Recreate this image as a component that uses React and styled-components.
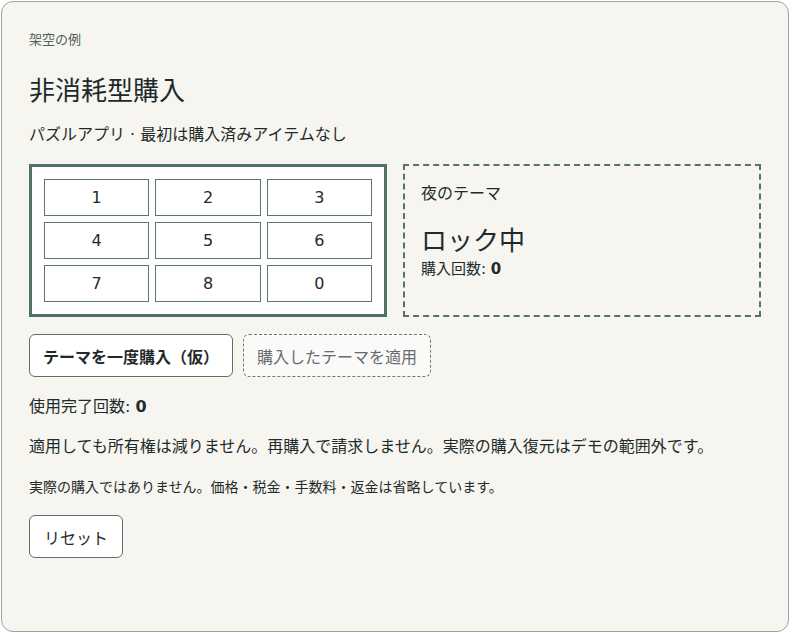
import React, { useState } from "react";
import styled, { createGlobalStyle } from "styled-components";

const GlobalStyle = createGlobalStyle`
  html, body {
    margin: 0;
    padding: 0;
    background: #ffffff;
  }
  body {
    font-family: "DejaVu Sans", "Noto Sans CJK JP", sans-serif;
    color: #1f2b2b;
  }
`;

const keys = ["1", "2", "3", "4", "5", "6", "7", "8", "0"];

export default function App() {
  const [purchased, setPurchased] = useState(0);
  const [used, setUsed] = useState(0);

  const buy = () => {
    if (purchased === 0) setPurchased(1);
  };

  const apply = () => {
    if (purchased > 0) setUsed(used + 1);
  };

  const reset = () => {
    setPurchased(0);
    setUsed(0);
  };

  return (
    <>
      <GlobalStyle />
      <Card>
        <Eyebrow>架空の例</Eyebrow>
        <Title>非消耗型購入</Title>
        <Lead>パズルアプリ · 最初は購入済みアイテムなし</Lead>
        <Panels>
          <Board>
            {keys.map((key) => (
              <Key key={key}>{key}</Key>
            ))}
          </Board>
          <Theme $owned={purchased > 0}>
            <ThemeName>夜のテーマ</ThemeName>
            <ThemeState>{purchased > 0 ? "購入済み" : "ロック中"}</ThemeState>
            <Count>
              購入回数: <strong>{purchased}</strong>
            </Count>
          </Theme>
        </Panels>
        <Actions>
          <Button onClick={buy}>テーマを一度購入（仮）</Button>
          <Button $ghost disabled={purchased === 0} onClick={apply}>
            購入したテーマを適用
          </Button>
        </Actions>
        <Stat>
          使用完了回数: <strong>{used}</strong>
        </Stat>
        <Text>
          適用しても所有権は減りません。再購入で請求しません。実際の購入復元はデモの範囲外です。
        </Text>
        <Note>実際の購入ではありません。価格・税金・手数料・返金は省略しています。</Note>
        <ResetButton onClick={reset}>リセット</ResetButton>
      </Card>
    </>
  );
}

const Card = styled.main`
  box-sizing: border-box;
  width: 788px;
  height: 631px;
  margin: 1px;
  padding: 29px 27px;
  background: #f6f5f0;
  border: 1px solid #9ba39f;
  border-radius: 12px;
`;

const Eyebrow = styled.div`
  font-size: 13px;
  line-height: 18px;
  color: #4f5f5a;
  margin-bottom: 25px;
`;

const Title = styled.h1`
  margin: 0 0 15px;
  font-size: 26px;
  line-height: 34px;
  font-weight: 400;
  color: #1d2a2a;
`;

const Lead = styled.p`
  margin: 0 0 17px;
  font-size: 16px;
  line-height: 24px;
`;

const Panels = styled.div`
  display: grid;
  grid-template-columns: 1fr 1fr;
  gap: 16px;
`;

const Board = styled.div`
  display: grid;
  grid-template-columns: repeat(3, 1fr);
  gap: 6px;
  padding: 12px;
  background: #ffffff;
  border: 3px solid #4f7268;
`;

const Key = styled.button`
  height: 37px;
  background: #ffffff;
  border: 1px solid #5a766d;
  border-radius: 0;
  font-family: inherit;
  font-size: 16px;
  color: #1f2b2b;
  cursor: pointer;
`;

const Theme = styled.div`
  box-sizing: border-box;
  padding: 16px 16px;
  border: 2px dashed #557468;
  background: ${(p) => (p.$owned ? "#ffffff" : "transparent")};
`;

const ThemeName = styled.div`
  font-size: 16px;
  line-height: 24px;
  margin-bottom: 19px;
`;

const ThemeState = styled.div`
  font-size: 26px;
  line-height: 32px;
  font-weight: 400;
`;

const Count = styled.div`
  margin-top: 1px;
  font-size: 15px;
  line-height: 22px;
`;

const Actions = styled.div`
  display: flex;
  gap: 10px;
  margin-top: 17px;
`;

const Button = styled.button`
  height: 43px;
  padding: 0 13px;
  background: ${(p) => (p.$ghost ? "#fafaf8" : "#ffffff")};
  border: 1px ${(p) => (p.$ghost ? "dashed #6f7a76" : "solid #5e6f6a")};
  border-radius: 6px;
  font-family: inherit;
  font-size: 16px;
  font-weight: ${(p) => (p.$ghost ? 400 : 600)};
  color: ${(p) => (p.$ghost ? "#676c6a" : "#1f2b2b")};
  cursor: pointer;

  &:disabled {
    cursor: default;
  }
`;

const Stat = styled.p`
  margin: 18px 0 0;
  font-size: 16px;
  line-height: 24px;
`;

const Text = styled.p`
  margin: 16px 0 0;
  font-size: 16px;
  line-height: 24px;
`;

const Note = styled.p`
  margin: 18px 0 0;
  font-size: 14px;
  line-height: 20px;
`;

const ResetButton = styled.button`
  margin-top: 18px;
  height: 43px;
  padding: 0 14px;
  background: #ffffff;
  border: 1px solid #5e6f6a;
  border-radius: 6px;
  font-family: inherit;
  font-size: 16px;
  color: #1f2b2b;
  cursor: pointer;
`;
